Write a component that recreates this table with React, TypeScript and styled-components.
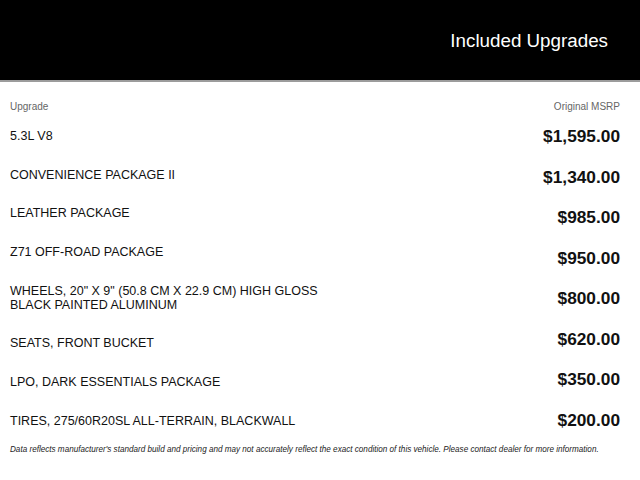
import React from "react";
import styled, { createGlobalStyle } from "styled-components";

const Global = createGlobalStyle`
  html, body { margin: 0; padding: 0; background: #fff; }
  body { font-family: "Liberation Sans", Arial, sans-serif; }
`;

const Page = styled.div`
  width: 640px;
  height: 480px;
  display: flex;
  flex-direction: column;
  overflow: hidden;
`;

const Banner = styled.header`
  height: 80px;
  background: #000;
  border-bottom: 2px solid #9c9c9c;
  display: flex;
  align-items: center;
  justify-content: flex-end;
  padding-right: 32px;
  box-sizing: content-box;
`;

const Title = styled.h1`
  margin: 0;
  font-size: 18.8px;
  font-weight: 400;
  color: #fff;
  padding-top: 2px;
`;

const Content = styled.main`
  padding: 18px 20px 0 10px;
  display: flex;
  flex-direction: column;
`;

const HeadRow = styled.div`
  display: flex;
  justify-content: space-between;
  font-size: 10px;
  line-height: 14px;
  color: #666;
`;

const Body = styled.div`
  display: flex;
  justify-content: space-between;
  margin-top: 15px;
`;

const NameList = styled.div`
  display: flex;
  flex-direction: column;
  gap: 24.7px;
`;

const Name = styled.div`
  font-size: 12.5px;
  line-height: 14px;
  color: #111;
`;

const PriceList = styled.div`
  display: flex;
  flex-direction: column;
  align-items: flex-end;
  gap: 18.55px;
  margin-top: -4px;
`;

const Price = styled.div`
  font-size: 17.3px;
  line-height: 22px;
  font-weight: 700;
  color: #111;
`;

const Note = styled.p`
  margin: 13px 0 0;
  font-size: 8.15px;
  line-height: 12px;
  font-style: italic;
  color: #222;
  white-space: nowrap;
`;

const items = [
  { name: ["5.3L V8"], price: "$1,595.00" },
  { name: ["CONVENIENCE PACKAGE II"], price: "$1,340.00" },
  { name: ["LEATHER PACKAGE"], price: "$985.00" },
  { name: ["Z71 OFF-ROAD PACKAGE"], price: "$950.00" },
  {
    name: ['WHEELS, 20" X 9" (50.8 CM X 22.9 CM) HIGH GLOSS', "BLACK PAINTED ALUMINUM"],
    price: "$800.00",
  },
  { name: ["SEATS, FRONT BUCKET"], price: "$620.00" },
  { name: ["LPO, DARK ESSENTIALS PACKAGE"], price: "$350.00" },
  { name: ["TIRES, 275/60R20SL ALL-TERRAIN, BLACKWALL"], price: "$200.00" },
];

export default function App() {
  return (
    <Page>
      <Global />
      <Banner>
        <Title>Included Upgrades</Title>
      </Banner>
      <Content>
        <HeadRow>
          <span>Upgrade</span>
          <span>Original MSRP</span>
        </HeadRow>
        <Body>
          <NameList>
            {items.map((it) => (
              <Name key={it.price}>
                {it.name.map((l, i) => (
                  <React.Fragment key={i}>
                    {i > 0 && <br />}
                    {l}
                  </React.Fragment>
                ))}
              </Name>
            ))}
          </NameList>
          <PriceList>
            {items.map((it) => (
              <Price key={it.price}>{it.price}</Price>
            ))}
          </PriceList>
        </Body>
        <Note>
          Data reflects manufacturer's standard build and pricing and may not accurately reflect the exact
          condition of this vehicle. Please contact dealer for more information.
        </Note>
      </Content>
    </Page>
  );
}
